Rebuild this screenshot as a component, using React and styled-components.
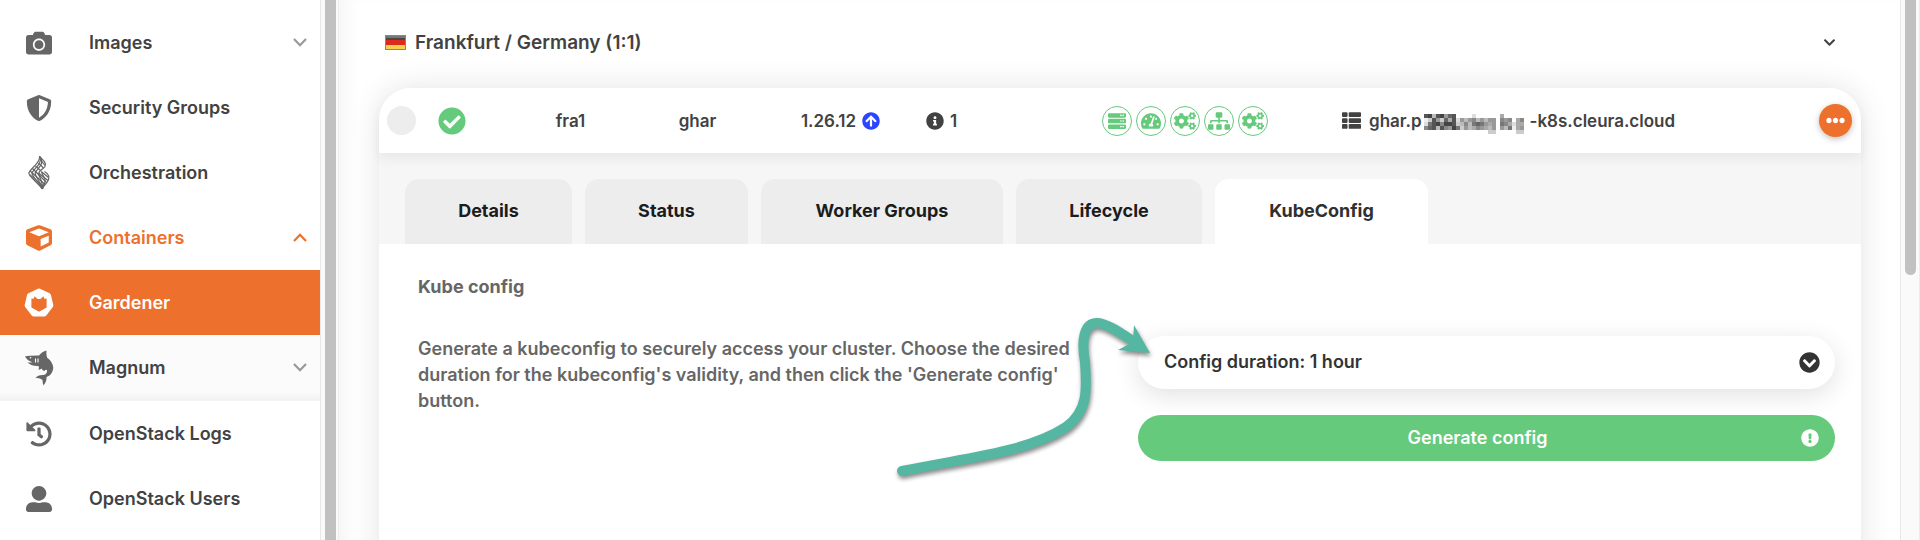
import React from 'react';
import styled, { createGlobalStyle, css } from 'styled-components';
import {
  FaCamera, FaShieldAlt, FaCube, FaHistory, FaUserAlt, FaChevronDown, FaCheckCircle,
  FaArrowCircleUp, FaInfoCircle, FaServer, FaTachometerAlt, FaCogs, FaSitemap, FaThList,
  FaEllipsisH, FaChevronCircleDown, FaExclamationCircle,
} from 'react-icons/fa';

const orange = '#ed702d';
const green = '#65ca7b';
const ink = '#424242';
const grey = '#666666';

const GlobalStyle = createGlobalStyle`
  *, *::before, *::after { box-sizing: border-box; }
  body {
    margin: 0;
    background: #ffffff;
    color: ${ink};
    font-family: Inter, "Liberation Sans", sans-serif;
    font-size: 18px;
    font-weight: 600;
    overflow: hidden;
  }
  button, select { font: inherit; color: inherit; }
`;

const Page = styled.div`
  display: flex;
  height: 100vh;
  overflow: hidden;
`;

/* ---------- sidebar ---------- */

const Sidebar = styled.nav`
  flex: 0 0 320px;
  padding-top: 10px;
  overflow: hidden;
`;

const NavItem = styled.a`
  display: grid;
  grid-template-columns: 78px 1fr 27px;
  align-items: center;
  height: 65px;
  color: ${(p) => (p.$tone === 'active' ? '#ffffff' : p.$tone === 'open' ? orange : ink)};
  background: ${(p) => (p.$tone === 'active' ? orange : 'transparent')};
  text-decoration: none;
`;

const NavIcon = styled.span`
  display: flex;
  justify-content: center;
  color: ${(p) => (p.$tone === 'active' ? '#ffffff' : p.$tone === 'open' ? orange : grey)};
`;

const NavLabel = styled.span`
  padding: 0 0 1px 11px;
`;

const SubNav = styled.div`
  background: #fbfbfb;
  border-bottom: 1px solid #f4f4f4;
  box-shadow: inset 0 -10px 10px -8px rgba(0, 0, 0, 0.06);
`;

const Chevron = ({ up }) => (
  <svg width="14" height="9" viewBox="0 0 14 9" fill="none" stroke={up ? orange : '#999999'} strokeWidth="2.2" aria-hidden="true">
    <path d={up ? 'M1 8L7 1.8L13 8' : 'M1 1L7 7.2L13 1'} />
  </svg>
);

const HeatIcon = () => (
  <svg width="22" height="34" viewBox="0 0 22 34" fill="none" stroke={grey} strokeWidth="1.2" aria-hidden="true">
    <path d="M11.500 .5C12.500 7 3 11.500 .8 17C.5 20 9 26 14.500 33" />
    <path d="M11.500 .5C15 8 6 12 4 17C3.500 20.500 11 26 14.500 33" />
    <path d="M11.500 .5C18 8 9 12 7.200 17C7 21 13 26 14.500 33" />
    <path d="M11.500 .5C15 4 19 7 17 10.500C15 13.500 11 14.500 10.500 17.500C10.500 20 15 25 14.500 33" />
    <path d="M13.500 15.500C13.500 18.500 18 22 17 26C16 28.500 14.500 30 14.500 33" />
    <path d="M16.500 15.500C21 18 22 21.500 19.500 25.500C18 28.500 15 29.500 14.500 33" />
    <path d="M12.200 3.500L17 9.500M10.500 7L15.500 12M7.500 10L12.500 14.500M4.500 12.500L18.500 26.500M2.200 15L17 28.500M1.500 18.500L15.500 30.500M10.500 17L20 24.500M13.500 15.800L20.500 21.500" />
  </svg>
);

const GardenerIcon = () => (
  <svg width="30" height="30" viewBox="0 0 30 30" aria-hidden="true">
    <path
      d="M13.900 .7Q15 .2 16.100 .7L25.600 5.200Q26.600 5.700 26.900 6.800L29.300 17Q29.500 18.100 28.800 19L22.300 27.500Q21.500 28.500 20.300 28.500H9.700Q8.500 28.500 7.700 27.500L1.200 19Q.5 18.100 .7 17L3.100 6.800Q3.400 5.700 4.400 5.200Z"
      fill="#ffffff"
    />
    <path d="M7.400 10.600L9.600 10.800L10.700 8.200L13.500 11H16.500L19.300 8.200L20.400 10.800L22.600 10.600V19.500L15 23.800L7.400 19.500Z" fill={orange} />
  </svg>
);

const SharkIcon = () => (
  <svg width="30" height="36" viewBox="0 0 30 36" aria-hidden="true">
    <path
      d="M1 6.500Q4 5.500 15 5.500Q18 1.500 22.500 .5Q22 3.500 23 7.500Q29 12 29.300 18Q28.500 25 22.500 27Q23 31 19.500 35.500Q18.500 33 18.500 30Q15.500 27.500 11.500 28.200Q14 24.500 20 25Q23.500 23.500 23 20Q21.500 19 20.500 21Q18.500 20.500 17.500 18.500Q16 20 14.500 19.500Q15.500 17.500 14.500 16Q8 16.500 3.500 12.500Q5.500 12.800 8.500 12.200Q3 10.500 1 6.500Z"
      fill={grey}
    />
    <circle cx="6.500" cy="7.800" r="0.800" fill="#ffffff" />
    <path d="M11.500 8.500V12.500M14 8.500V12.500" stroke="#ffffff" strokeWidth="1.100" />
  </svg>
);

/* ---------- scroll bars ---------- */

const ScrollTrack = styled.div`
  flex: 0 0 ${(p) => p.$width}px;
  padding: 0 2px 0 4px;
  background: #fafafa;
  border-left: 1px solid #e8e8e8;
  border-right: 1px solid #ececec;
`;

const ScrollThumb = styled.div`
  width: 11px;
  height: ${(p) => (p.$share ? p.$share : '100%')};
  background: #c1c1c1;
  border-radius: ${(p) => (p.$share ? '0 0 6px 6px' : '0')};
`;

/* ---------- main column ---------- */

const Main = styled.main`
  flex: 1;
  min-width: 0;
  padding: 0 39px 0 40px;
  overflow: hidden;
  box-shadow: inset 16px 0 16px -8px rgba(0, 0, 0, 0.04);
`;

const Region = styled.button`
  display: flex;
  align-items: center;
  width: 100%;
  height: 88px;
  padding: 0 25px 4px 6px;
  gap: 9px;
  border: 0;
  background: none;
  font-size: 19px;
  text-align: left;
  svg:last-child { margin-left: auto; }
`;

const GermanFlag = () => (
  <svg width="21" height="15" viewBox="0 0 21 15" aria-hidden="true">
    <rect width="21" height="15" fill="#8b8778" />
    <rect x="1" y="1" width="19" height="4.500" fill="#484848" />
    <rect x="1" y="1" width="19" height="2" fill="#777777" />
    <rect x="1" y="5" width="19" height="5" fill="#dd2a1c" />
    <rect x="1" y="10" width="19" height="4" fill="#f8cf4d" />
  </svg>
);

const Card = styled.section`
  min-height: 500px;
  border-radius: 32px 32px 0 0;
  background: #ffffff;
  box-shadow: 0 0 32px rgba(0, 0, 0, 0.11);
`;

const ClusterRow = styled.div`
  position: relative;
  display: grid;
  grid-template-columns: 36px 58px 26px 127px 127px 159px 182px 240px 1fr 34px;
  align-items: center;
  height: 65px;
  padding: 0 8px;
  border-radius: 32px 32px 0 0;
  background: #ffffff;
  box-shadow: 0 6px 12px rgba(0, 0, 0, 0.06);
  font-size: 17px;
`;

const Pick = styled.input`
  appearance: none;
  width: 29px;
  height: 29px;
  margin: 0;
  border-radius: 50%;
  background: #ededed;
`;

const Cell = styled.div`
  grid-column: ${(p) => p.$col};
  display: flex;
  align-items: center;
  justify-content: ${(p) => (p.$start ? 'flex-start' : 'center')};
  gap: ${(p) => p.$gap || 6}px;
  padding-left: ${(p) => p.$indent || 0}px;
  white-space: nowrap;
`;

const Health = styled.span`
  display: flex;
  align-items: center;
  justify-content: center;
  width: 30px;
  height: 30px;
  overflow: hidden;
  border: 1px solid ${green};
  border-radius: 50%;
  color: ${green};
  svg { flex: none; }
`;

const Host = styled.span`
  display: flex;
  align-items: center;
`;

const MoreButton = styled.button`
  display: flex;
  align-items: center;
  justify-content: center;
  width: 33px;
  height: 33px;
  padding: 0;
  border: 0;
  border-radius: 50%;
  background: ${orange};
  color: #ffffff;
  box-shadow: 0 2px 6px rgba(0, 0, 0, 0.25);
`;

/* Greyscale levels, one hex digit per 4px block, for the hidden part of the host name. */
const maskRows = [
  '54b54965ffffdffffffafffffff',
  'ec59c6a5d9b98b9b99f898fa8ff',
  'd7548445cb8b7679a9f78adaaff',
  '865b58947c9ba89ab9f9b7ea9ff',
  'ffffffffffffffffccfffffccff',
];

const HostMask = () => (
  <svg width="108" height="26" viewBox="0 0 108 26" shapeRendering="crispEdges" aria-hidden="true">
    {maskRows.map((row, y) => [...row].map((level, x) => (
      level === 'f' ? null : <rect key={`${x}-${y}`} x={x * 4 + 2} y={y * 4 + 6} width="4" height="4" fill={`#${level}${level}${level}`} />
    )))}
  </svg>
);

const Tabs = styled.div`
  display: flex;
  gap: 13px;
  padding: 26px 26px 0;
  background: #f6f6f6;
`;

const Tab = styled.button`
  width: ${(p) => p.$width}px;
  height: 65px;
  padding: 0 0 2px;
  border: 0;
  border-radius: 14px 14px 0 0;
  background: #ededed;
  color: #1c1c1c;
  font-weight: 700;
  ${(p) => p.$selected && css`
    background: #ffffff;
    color: #303030;
  `}
`;

const Panel = styled.div`
  display: grid;
  grid-template-columns: 1fr 1fr;
  gap: 23px;
  padding: 30px 26px 0 39px;
  color: ${grey};
`;

const Title = styled.h2`
  margin: 0 0 36px;
  font-size: 18px;
  font-weight: 700;
  line-height: 26px;
`;

const Copy = styled.p`
  margin: 0;
  line-height: 26px;
`;

const Form = styled.form`
  padding-top: 62px;
`;

const Field = styled.div`
  display: grid;
  align-items: center;
  margin-bottom: 26px;
  color: #333333;
  > * { grid-area: 1 / 1; }
  > svg { justify-self: end; margin-right: 15px; pointer-events: none; }
`;

const Duration = styled.select`
  appearance: none;
  width: 100%;
  height: 53px;
  padding: 0 48px 2px 26px;
  border: 0;
  border-radius: 27px;
  background: #ffffff;
  box-shadow: 0 6px 26px rgba(0, 0, 0, 0.12);
`;

const Generate = styled.button`
  display: grid;
  grid-template-columns: 1fr 18px;
  align-items: center;
  width: 100%;
  height: 46px;
  padding: 0 16px;
  border: 0;
  border-radius: 23px;
  background: ${green};
  color: #ffffff;
  > span { padding-bottom: 2px; }
`;

const Pointer = styled.svg`
  position: absolute;
  left: 890px;
  top: 310px;
  pointer-events: none;
  filter: drop-shadow(1px 3px 2px rgba(0, 0, 0, 0.45));
`;

const nav = [
  { label: 'Images', icon: <FaCamera size={26} />, chevron: 'down' },
  { label: 'Security Groups', icon: <FaShieldAlt size={26} /> },
  { label: 'Orchestration', icon: <HeatIcon /> },
  { label: 'Containers', icon: <FaCube size={26} />, tone: 'open', chevron: 'up' },
];
const subNav = [
  { label: 'Gardener', icon: <GardenerIcon />, tone: 'active' },
  { label: 'Magnum', icon: <SharkIcon />, chevron: 'down' },
];
const navEnd = [
  { label: 'OpenStack Logs', icon: <FaHistory size={26} /> },
  { label: 'OpenStack Users', icon: <FaUserAlt size={26} /> },
];
const tabs = [
  ['Details', 167], ['Status', 163], ['Worker Groups', 242], ['Lifecycle', 186], ['KubeConfig', 213],
];

const NavRow = ({ label, icon, tone, chevron }) => (
  <NavItem href="#" $tone={tone}>
    <NavIcon $tone={tone}>{icon}</NavIcon>
    <NavLabel>{label}</NavLabel>
    {chevron && <Chevron up={chevron === 'up'} />}
  </NavItem>
);

export default function App() {
  return (
    <Page>
      <GlobalStyle />
      <Sidebar>
        {nav.map((item) => <NavRow key={item.label} {...item} />)}
        <SubNav>{subNav.map((item) => <NavRow key={item.label} {...item} />)}</SubNav>
        {navEnd.map((item) => <NavRow key={item.label} {...item} />)}
      </Sidebar>
      <ScrollTrack $width={19}><ScrollThumb /></ScrollTrack>

      <Main>
        <Region type="button">
          <GermanFlag />
          <span>Frankfurt / Germany (1:1)</span>
          <FaChevronDown size={13} />
        </Region>

        <Card>
          <ClusterRow>
            <Pick type="checkbox" aria-label="Select cluster ghar" />
            <Cell $col={2}><FaCheckCircle size={28} color={green} /></Cell>
            <Cell $col={4}>fra1</Cell>
            <Cell $col={5}>ghar</Cell>
            <Cell $col={6}>1.26.12 <FaArrowCircleUp size={18} color="#2b44ff" /></Cell>
            <Cell $col={7} $start $indent={6}><FaInfoCircle size={18} /> 1</Cell>
            <Cell $col={8} $start $gap={4}>
              <Health><FaServer size={18} /></Health>
              <Health><FaTachometerAlt size={20} /></Health>
              <Health><FaCogs size={22} /></Health>
              <Health><FaSitemap size={22} /></Health>
              <Health><FaCogs size={22} /></Health>
            </Cell>
            <Cell $col={9} $start $gap={8}>
              <FaThList size={19} />
              <Host><span>ghar.p</span><HostMask /><span>-k8s.cleura.cloud</span></Host>
            </Cell>
            <MoreButton type="button" aria-label="More actions"><FaEllipsisH size={19} /></MoreButton>
          </ClusterRow>

          <Tabs role="tablist">
            {tabs.map(([label, width]) => (
              <Tab key={label} type="button" role="tab" $width={width} $selected={label === 'KubeConfig'} aria-selected={label === 'KubeConfig'}>
                {label}
              </Tab>
            ))}
          </Tabs>

          <Panel role="tabpanel">
            <div>
              <Title>Kube config</Title>
              <Copy>
                Generate a kubeconfig to securely access your cluster. Choose the desired duration for
                the kubeconfig's validity, and then click the 'Generate config' button.
              </Copy>
            </div>
            <Form>
              <Field>
                <Duration aria-label="Config duration" defaultValue="1">
                  <option value="1">Config duration: 1 hour</option>
                </Duration>
                <FaChevronCircleDown size={21} />
              </Field>
              <Generate type="button">
                <span>Generate config</span>
                <FaExclamationCircle size={18} />
              </Generate>
            </Form>
          </Panel>
        </Card>
      </Main>
      <ScrollTrack $width={20}><ScrollThumb $share="51%" /></ScrollTrack>

      <Pointer width="270" height="175" viewBox="0 0 270 175" aria-hidden="true">
        <path d="M12 161C80 147 138 142 176 117C198 101 197 80 195 52C191 30 194 13 207 13C217 13 232 24 246 33" fill="none" stroke="#55b7a2" strokeWidth="10" strokeLinecap="round" />
        <path d="M244 15L260 43L228 40L243 32Z" fill="#55b7a2" />
      </Pointer>
    </Page>
  );
}
